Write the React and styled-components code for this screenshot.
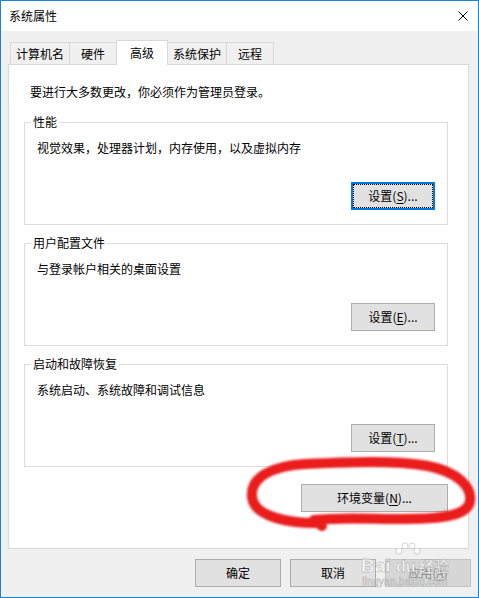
import React from 'react';
import styled, { createGlobalStyle } from 'styled-components';

const GlobalStyle = createGlobalStyle`
  html, body {
    margin: 0;
    padding: 0;
    background: #fff;
  }
  body {
    font-family: "Noto Sans CJK SC", "Noto Sans", sans-serif;
    font-size: 12px;
    color: #000;
  }
`;

const Window = styled.div`
  position: relative;
  width: 479px;
  height: 598px;
  box-sizing: border-box;
  border: 1px solid #1883d7;
  background: #f0f0f0;
  display: flex;
  flex-direction: column;
  overflow: hidden;
`;

const TitleBar = styled.div`
  height: 30px;
  flex-shrink: 0;
  background: #fff;
  display: flex;
  align-items: center;
  justify-content: space-between;
  padding: 0 10px 0 8px;
  line-height: 16px;
`;

const CloseIcon = styled.svg`
  width: 10px;
  height: 10px;
  display: block;
`;

const Body = styled.div`
  flex: 1;
  display: flex;
  flex-direction: column;
  padding: 9px 9px 0 7px;
  min-height: 0;
`;

const TabRow = styled.div`
  display: flex;
  align-items: flex-end;
  height: 24px;
  padding-left: 2px;
  position: relative;
  z-index: 1;
`;

const Tab = styled.div`
  box-sizing: border-box;
  min-width: ${(p) => (p.$active ? 52 : 48)}px;
  height: ${(p) => (p.$active ? 25 : 22)}px;
  margin-bottom: ${(p) => (p.$active ? -1 : 0)}px;
  padding: 0 5px;
  margin-left: -1px;
  border: 1px solid #d9d9d9;
  border-bottom: none;
  background: ${(p) => (p.$active ? '#fff' : '#f0f0f0')};
  display: flex;
  align-items: center;
  justify-content: center;
  padding-top: ${(p) => (p.$active ? 0 : 1)}px;
  line-height: 16px;
  position: relative;
  z-index: ${(p) => (p.$active ? 2 : 1)};

  &:first-child {
    margin-left: 0;
  }
`;

const Panel = styled.div`
  flex: 1;
  background: #fff;
  border: 1px solid #d9d9d9;
  padding: 19px 20px 0 15px;
  display: flex;
  flex-direction: column;
  min-height: 0;
`;

const Intro = styled.div`
  margin-left: 6px;
  line-height: 16px;
`;

const Groups = styled.div`
  display: flex;
  flex-direction: column;
  gap: 11px;
  margin-top: 15px;
`;

const Group = styled.fieldset`
  margin: 0;
  min-width: 0;
  border: 1px solid #dcdcdc;
  padding: 11px 12px 14px 12px;
`;

const Legend = styled.legend`
  line-height: 14px;
  padding: 0 2px;
  margin-left: -6px;
`;

const Desc = styled.div`
  line-height: 16px;
`;

const ButtonRow = styled.div`
  display: flex;
  justify-content: flex-end;
  margin-top: 26px;
`;

const Button = styled.button`
  box-sizing: border-box;
  width: ${(p) => p.$w || 84}px;
  height: 28px;
  padding: 0;
  margin: 0;
  font: inherit;
  font-size: 12px;
  line-height: 16px;
  color: ${(p) => (p.disabled ? '#8a8a8a' : '#000')};
  background: ${(p) => (p.disabled ? '#d6d6d6' : '#e1e1e1')};
  border: ${(p) =>
    p.$focused ? '2px solid #0078d7' : p.disabled ? '1px solid #c4c4c4' : '1px solid #adadad'};
  outline: ${(p) => (p.$focused ? '1px dotted #000' : 'none')};
  outline-offset: -3px;
  display: flex;
  align-items: center;
  justify-content: center;
  flex-shrink: 0;

  u {
    text-decoration: underline;
    text-underline-offset: 2px;
  }
`;

const EnvButtonWrap = styled.div`
  display: flex;
  justify-content: flex-end;
  margin-top: 17px;
`;

const FooterBar = styled.div`
  display: flex;
  justify-content: flex-end;
  gap: 9px;
  margin: 10px -2px 10px 0;
`;

const Overlay = styled.svg`
  position: absolute;
  left: -1px;
  top: -1px;
  width: 479px;
  height: 598px;
  pointer-events: none;
  z-index: 5;
`;

const groups = [
  { title: '性能', desc: '视觉效果，处理器计划，内存使用，以及虚拟内存', key: 'S', focused: true },
  { title: '用户配置文件', desc: '与登录帐户相关的桌面设置', key: 'E' },
  { title: '启动和故障恢复', desc: '系统启动、系统故障和调试信息', key: 'T' },
];

const tabs = ['计算机名', '硬件', '高级', '系统保护', '远程'];

export default function App() {
  return (
    <>
      <GlobalStyle />
      <Window>
        <TitleBar>
          <span>系统属性</span>
          <CloseIcon viewBox="0 0 10 10">
            <path d="M0.5 0.5 L9.5 9.5 M9.5 0.5 L0.5 9.5" stroke="#000" strokeWidth="1" fill="none" />
          </CloseIcon>
        </TitleBar>
        <Body>
          <TabRow>
            {tabs.map((t) => (
              <Tab key={t} $active={t === '高级'}>{t}</Tab>
            ))}
          </TabRow>
          <Panel>
            <Intro>要进行大多数更改，你必须作为管理员登录。</Intro>
            <Groups>
              {groups.map((g) => (
                <Group key={g.title}>
                  <Legend>{g.title}</Legend>
                  <Desc>{g.desc}</Desc>
                  <ButtonRow>
                    <Button $focused={g.focused}>
                      设置(<u>{g.key}</u>)...
                    </Button>
                  </ButtonRow>
                </Group>
              ))}
            </Groups>
            <EnvButtonWrap>
              <Button $w={147}>
                环境变量(<u>N</u>)...
              </Button>
            </EnvButtonWrap>
          </Panel>
          <FooterBar>
            <Button $w={86}>确定</Button>
            <Button $w={86}>取消</Button>
            <Button $w={86} disabled>
              应用(<u>A</u>)
            </Button>
          </FooterBar>
        </Body>

        {/* hand-drawn red circle and watermark lie over the dialog */}
        <Overlay viewBox="0 0 479 598">
          <defs>
            <filter id="soft" x="-10%" y="-10%" width="120%" height="120%">
              <feGaussianBlur stdDeviation="0.9" />
            </filter>
          </defs>
          <path
            d="M322 523 C290 524 254 517 252 497 C250 477 272 466 305 464 C350 462 395 460 428 466 C458 472 472 487 470 501 C468 515 445 519 405 519 C370 519 340 517 314 520 L322 526"
            stroke="#ea1a1d"
            strokeWidth="10"
            strokeLinecap="round"
            strokeLinejoin="round"
            fill="none"
            filter="url(#soft)"
          />
          <g fill="rgba(255,255,255,0.82)" stroke="rgba(110,110,110,0.35)" strokeWidth="0.8">
            <text x="361" y="572" fontFamily="Liberation Sans, sans-serif" fontWeight="bold" fontSize="19">Bai</text>
            <circle cx="399" cy="551" r="3" />
            <circle cx="405" cy="546" r="3" />
            <circle cx="412" cy="546" r="3" />
            <circle cx="417" cy="551" r="3" />
            <text x="396" y="572" fontFamily="Liberation Sans, sans-serif" fontWeight="bold" fontSize="16">du</text>
            <text x="419" y="572" fontFamily="Noto Sans CJK SC, sans-serif" fontWeight="bold" fontSize="15">经验</text>
            <text x="362" y="585" fontFamily="Liberation Sans, sans-serif" fontSize="10" letterSpacing="0.3">jingyan.baidu.com</text>
          </g>
        </Overlay>
      </Window>
    </>
  );
}
